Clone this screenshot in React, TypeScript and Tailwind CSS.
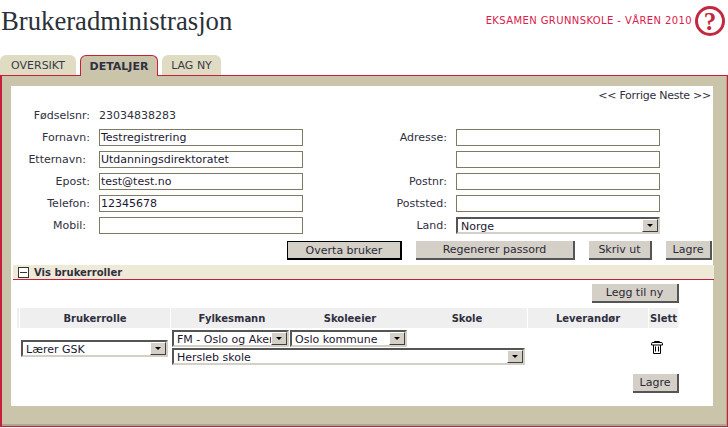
const leftRows = [
  { label: "Fornavn:", value: "Testregistrering", pr: "pr-0" },
  { label: "Etternavn:", value: "Utdanningsdirektoratet", pr: "pr-[4px]" },
  { label: "Epost:", value: "test@test.no", pr: "pr-0" },
  { label: "Telefon:", value: "12345678", pr: "pr-0" },
  { label: "Mobil:", value: "", pr: "pr-[4px]" },
];

const rightRows = [
  { label: "Adresse:", value: "" },
  { label: "", value: "" },
  { label: "Postnr:", value: "" },
  { label: "Poststed:", value: "" },
];

function TextBox({ value }: { value: string }) {
  return (
    <div className="flex h-[17px] w-[204px] items-center border border-[#7f7a66] bg-white pl-[1px] text-[#1c1830]">
      {value}
    </div>
  );
}

function Select({ value, className }: { value: string; className: string }) {
  return (
    <div
      className={`flex items-center justify-between border-2 border-t-[#555555] border-l-[#555555] border-r-[#d4d0c8] border-b-[#d4d0c8] bg-white pl-[3px] text-[#1c1830] ${className}`}
    >
      <span className="overflow-hidden pt-px whitespace-nowrap">{value}</span>
      <span className="flex h-[13px] w-[16px] shrink-0 items-center justify-center border border-t-white border-l-white border-r-[#404040] border-b-[#404040] bg-[#d4d0c8]">
        <span className="h-0 w-0 border-x-[3px] border-t-[3px] border-x-transparent border-t-black" />
      </span>
    </div>
  );
}

function Button({ label, className }: { label: string; className: string }) {
  return (
    <button
      className={`flex h-[19px] items-center justify-center border-r-2 border-b-2 border-r-[#555555] border-b-[#555555] bg-[#d4d0c8] text-[#2a2a35] ${className}`}
    >
      {label}
    </button>
  );
}

function TrashIcon() {
  return (
    <svg width="12" height="13" viewBox="0 0 12 13" fill="none" stroke="black" strokeWidth="1">
      <path d="M0.5 4V2.5Q0.5 1.5 2 1.5H10Q11.5 1.5 11.5 2.5V4H0.5M3.5 1.5V0.5H8.5V1.5M2.5 4V12.5H9.5V4" />
      <path d="M4.5 5.5V10.5M7.5 5.5V10.5" />
    </svg>
  );
}

export default function App() {
  return (
    <div className="h-[428px] w-[728px] overflow-hidden bg-white font-['DejaVu_Sans',Verdana,sans-serif] text-[11px] leading-none text-[#2f3040]">
      <header className="flex h-[55px] items-start justify-between">
        <h1 className="mt-[6px] pl-[1px] font-['Liberation_Serif',Georgia,serif] text-[26.7px] leading-[30px] text-[#2a3038]">
          Brukeradministrasjon
        </h1>
        <div className="mt-[6px] flex items-center gap-[3px] pr-[3px]">
          <span className="text-[10px] tracking-[0.4px] text-[#d8204a]">EKSAMEN GRUNNSKOLE - VÅREN 2010</span>
          <span className="flex h-[30px] w-[30px] items-center justify-center rounded-full border-[3px] border-[#c22840] font-['Liberation_Serif',serif] text-[25px] font-bold text-[#c22840]">
            ?
          </span>
        </div>
      </header>

      <nav className="relative z-10 flex h-[21px] items-start">
        <span className="flex h-[20px] w-[76px] items-center justify-center rounded-t-[6px] bg-[#e0dcc4] text-[#3a3a48]">
          OVERSIKT
        </span>
        <span className="ml-[4px] flex h-[21px] w-[78px] items-center justify-center rounded-t-[6px] border-x border-t border-[#c8203c] bg-[#c9c4aa] font-bold text-[#2f3040]">
          DETALJER
        </span>
        <span className="ml-[4px] flex h-[20px] w-[59px] items-center justify-center rounded-t-[6px] bg-[#e0dcc4] text-[#3a3a48]">
          LAG NY
        </span>
      </nav>

      <section className="-mt-px h-[352px] border-t border-r border-b border-l-2 border-[#c8203c] bg-[#c9c4aa] pt-[10px] pr-[12px] pl-[9px] shadow-[inset_-1px_-2px_0_#aca78e]">
        <div className="h-[320px] w-[702px] bg-white">
          <p className="pt-[3px] pr-[2px] text-right leading-[13px] tracking-[-0.25px]">&lt;&lt; Forrige Neste &gt;&gt;</p>

          <div className="mt-[5px] flex">
            <div className="flex w-[292px] flex-col gap-[5px]">
              <div className="flex h-[17px] items-center">
                <span className="w-[79px] text-right">Fødselsnr:</span>
                <span className="ml-[9px]">23034838283</span>
              </div>
              {leftRows.map((row) => (
                <div key={row.label} className="flex h-[17px] items-center">
                  <span className={`w-[79px] text-right ${row.pr}`}>{row.label}</span>
                  <span className="ml-[9px]">
                    <TextBox value={row.value} />
                  </span>
                </div>
              ))}
            </div>
            <div className="flex flex-col gap-[5px] pt-[22px]">
              {rightRows.map((row, index) => (
                <div key={index} className="flex h-[17px] items-center">
                  <span className="w-[144px] text-right">{row.label}</span>
                  <span className="ml-[9px]">
                    <TextBox value={row.value} />
                  </span>
                </div>
              ))}
              <div className="flex h-[17px] items-center">
                <span className="w-[144px] text-right">Land:</span>
                <Select value="Norge" className="ml-[9px] h-[17px] w-[204px]" />
              </div>
            </div>
          </div>

          <div className="mt-[7px] flex gap-[14px] pl-[276px]">
            <button className="flex h-[19px] w-[115px] items-center justify-center border border-r-2 border-b-2 border-black bg-[#d4d0c8] text-[#2a2a35]">
              Overta bruker
            </button>
            <Button label="Regenerer passord" className="w-[159px]" />
            <Button label="Skriv ut" className="w-[63px]" />
            <Button label="Lagre" className="w-[46px]" />
          </div>

          <div className="mt-[5px] ml-[2px] flex h-[15px] w-[701px] items-center gap-[5px] border-b border-[#c8203c] bg-[#efe9d8] pt-px pl-[5px] text-[10px] font-bold">
            <span className="flex h-[11px] w-[11px] items-center justify-center border border-[#333333] bg-white">
              <span className="h-px w-[7px] bg-[#333333]" />
            </span>
            Vis brukerroller
          </div>

          <div className="mt-[4px] ml-[581px]">
            <Button label="Legg til ny" className="w-[87px]" />
          </div>

          <div className="mt-[5px] ml-[6px] flex h-[20px] gap-px text-[10px] font-bold">
            <span className="w-[2px] bg-[#efefef]" />
            <span className="flex w-[150px] items-center justify-center bg-[#efefef] pt-px">Brukerrolle</span>
            <div className="flex w-[356px] items-center bg-[#efefef] pt-px text-center">
              <span className="w-[122px]">Fylkesmann</span>
              <span className="w-[114px]">Skoleeier</span>
              <span className="w-[120px]">Skole</span>
            </div>
            <span className="flex w-[120px] items-center justify-center bg-[#efefef] pt-px">Leverandør</span>
            <span className="flex w-[29px] items-center justify-center bg-[#efefef] pt-px">Slett</span>
          </div>

          <div className="flex h-[37px] items-start pt-[2px]">
            <Select value="Lærer GSK" className="mt-[10px] ml-[10px] h-[17px] w-[147px]" />
            <div className="ml-[4px] flex w-[353px] flex-col gap-px">
              <div className="flex gap-px">
                <Select value="FM - Oslo og Akershus" className="h-[17px] w-[117px]" />
                <Select value="Oslo kommune" className="h-[17px] w-[117px]" />
              </div>
              <Select value="Hersleb skole" className="h-[17px] w-[353px]" />
            </div>
            <span className="mt-[11px] ml-[126px]">
              <TrashIcon />
            </span>
          </div>

          <div className="mt-[9px] ml-[622px]">
            <Button label="Lagre" className="w-[46px]" />
          </div>
        </div>
      </section>
    </div>
  );
}
